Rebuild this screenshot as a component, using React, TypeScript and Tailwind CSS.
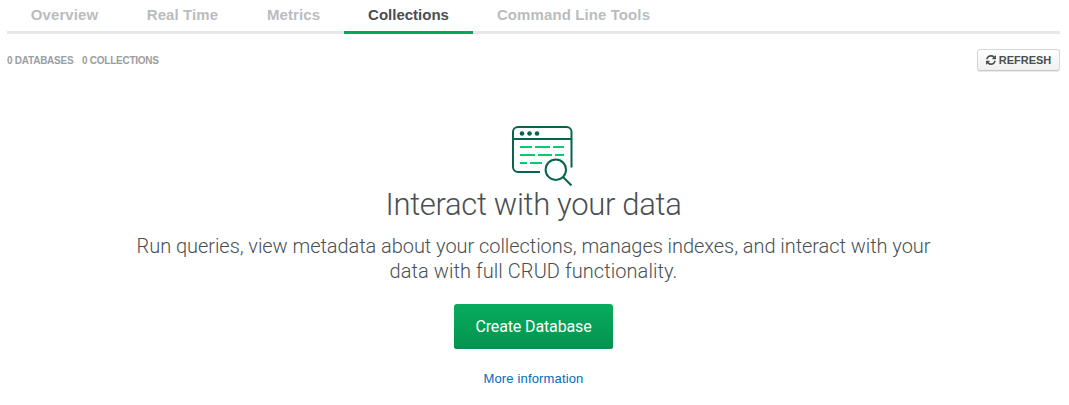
const tabs = [
  { label: "Overview", className: "w-[115px] tracking-[0.1px] text-[#babdbe]" },
  { label: "Real Time", className: "w-[121px] tracking-[0.1px] text-[#babdbe]" },
  { label: "Metrics", className: "w-[101px] tracking-[0.1px] text-[#babdbe]" },
  { label: "Collections", className: "w-[129px] border-[#00a85a] text-[#494f52]", active: true },
  { label: "Command Line Tools", className: "w-[201px] tracking-[0.1px] text-[#babdbe]" },
];

function RefreshIcon() {
  return (
    <svg width="10" height="10" viewBox="0 0 1536 1536" fill="currentColor" aria-hidden="true">
      <path d="M1511 928q0 5-1 7-64 268-268 434.500T764 1536q-146 0-282.500-55T238 1324l-129 129q-19 19-45 19t-45-19-19-45V960q0-26 19-45t45-19h448q26 0 45 19t19 45-19 45l-137 137q71 66 161 102t187 36q134 0 250-65t186-179q11-17 53-117 8-23 30-23h192q13 0 22.500 9.500t9.500 22.500zM1536 128v448q0 26-19 45t-45 19h-448q-26 0-45-19t-19-45 19-45l138-138Q969 256 768 256q-134 0-250 65T332 500q-11 17-53 117-8 23-30 23H50q-13 0-22.500-9.500T18 608v-7q65-268 270-434.500T768 0q146 0 284 55.500T1297 212l130-129q19-19 45-19t45 19 19 45z" />
    </svg>
  );
}

function QueryIcon() {
  return (
    <svg width="62" height="61" viewBox="0 0 62 61" fill="none" className="block" aria-hidden="true">
      <g stroke="#07634c" strokeWidth="2">
        <path d="M29 47H7a5 5 0 0 1-5-5V7a5 5 0 0 1 5-5h48.500a5 5 0 0 1 5 5v35.500M2 14h58.500" />
        <circle cx="44.800" cy="44.700" r="10.200" />
        <path d="m52 52 8.500 8.500" />
      </g>
      <g fill="#07634c">
        <circle cx="11" cy="8.500" r="2.300" />
        <circle cx="18.500" cy="8.500" r="2.300" />
        <circle cx="26" cy="8.500" r="2.300" />
      </g>
      <path d="M9 22h12m3 0h15m3 0h11M9 30h15m3 0h14m3 0h9M9 38h7m3 0h12" stroke="#08cb70" strokeWidth="2" />
    </svg>
  );
}

export default function App() {
  return (
    <div className="h-[405px] w-[1069px] overflow-hidden bg-white pl-[7px] pr-[9px] font-['Liberation_Sans',sans-serif] text-[#494f52]">
      <nav className="flex h-[34px] shadow-[inset_0_-3px_0_#e7e8e8]">
        {tabs.map((tab) => (
          <a
            key={tab.label}
            aria-current={tab.active ? "page" : undefined}
            className={`h-[34px] whitespace-nowrap text-center text-[15px] font-bold leading-[30px] ${tab.className} ${tab.active ? "border-b-[3px]" : ""}`}
          >
            {tab.label}
          </a>
        ))}
      </nav>

      <div className="mt-[15px] flex h-[22px] items-center justify-between">
        <div className="flex gap-[9px] whitespace-nowrap text-[10px] font-bold text-[#9a9e9f]">
          <span className="w-[66px] tracking-[-0.25px]">0 DATABASES</span>
          <span className="tracking-[-0.25px]">0 COLLECTIONS</span>
        </div>
        <button className="flex h-[22px] w-[83px] items-center justify-center gap-[3px] rounded-[3px] border border-[#d5d8d9] border-b-[#c6c9ca] bg-linear-to-b from-white to-[#f0f0f0] text-[11px] font-bold shadow-[0_1px_0_#e9eaea]">
          <RefreshIcon />
          REFRESH
        </button>
      </div>

      <main className="flex flex-col items-center pt-[54px]">
        <div className="ml-[17px]"><QueryIcon /></div>
        <h1 className="mt-[1px] h-[36px] whitespace-nowrap font-['Roboto',sans-serif] text-[31px] font-light leading-[36px] tracking-[-0.33px]">Interact with your data</h1>
        <p className="mt-[11px] whitespace-nowrap text-center font-['Roboto',sans-serif] text-[20px] font-light leading-[25px]">
          <span className="block tracking-[-0.055px]">Run queries, view metadata about your collections, manages indexes, and interact with your</span>
          <span className="block tracking-[0.07px]">data with full CRUD functionality.</span>
        </p>
        <button className="mt-[20px] h-[45px] w-[159px] rounded-[3px] bg-linear-to-b from-[#07ac5c] to-[#049350] font-['Roboto',sans-serif] text-[16px] tracking-[-0.13px] text-white shadow-[inset_0_-2px_0_#079050]">
          Create Database
        </button>
        <a className="mt-[20px] text-[13px] tracking-[0.15px] leading-[20px] text-[#006cbc]">More information</a>
      </main>
    </div>
  );
}
